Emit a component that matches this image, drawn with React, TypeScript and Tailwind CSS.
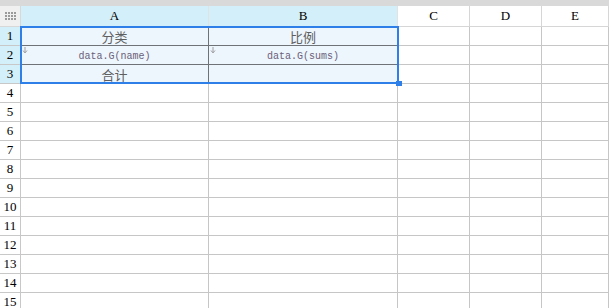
import React from "react";

const cols = [
  { key: "A", w: "w-[188px]", sel: true },
  { key: "B", w: "w-[189px]", sel: true },
  { key: "C", w: "w-[72px]", sel: false },
  { key: "D", w: "w-[72px]", sel: false },
  { key: "E", w: "flex-1", sel: false },
];

const mono = { fontFamily: '"Liberation Mono", "DejaVu Sans Mono", monospace' };
const serif = { fontFamily: '"Liberation Serif", "DejaVu Serif", serif' };
const cjk = { fontFamily: '"Noto Sans CJK SC", "Noto Sans", sans-serif' };

function DownMark() {
  return (
    <svg width="6" height="7" viewBox="0 0 6 7" className="absolute left-[1px] top-[1px]">
      <path d="M3 0v5M1 3.5L3 6l2-2.5" stroke="#a0a0a0" strokeWidth="1" fill="none" />
    </svg>
  );
}

function CornerDots() {
  return (
    <svg width="11" height="8" viewBox="0 0 11 8">
      {[0, 3, 6, 9].map((x) =>
        [0, 3, 6].map((y) => <rect key={`${x}-${y}`} x={x} y={y} width="2" height="2" fill="#9a9a9a" />)
      )}
    </svg>
  );
}

export default function App() {
  const rows = Array.from({ length: 15 }, (_, i) => i + 1);
  return (
    <div className="relative w-[609px] h-[308px] overflow-hidden bg-white">
      <div className="h-[6px] bg-[#d9d9da]" />
      {/* header */}
      <div className="flex h-[21px]">
        <div className="w-[21px] shrink-0 bg-[#f0f0f0] border-r border-b border-[#d8d8d8] flex items-center justify-center">
          <CornerDots />
        </div>
        {cols.map((c) => (
          <div
            key={c.key}
            className={`${c.w} shrink-0 border-r border-b flex items-center justify-center text-[13px] text-black ${
              c.sel ? "bg-[#d3eff9] border-[#e2e2e2]" : "bg-white border-[#d6d6d6]"
            }`}
            style={serif}
          >
            {c.key}
          </div>
        ))}
      </div>
      {rows.map((r) => {
        const sel = r <= 3;
        return (
          <div key={r} className="flex h-[19px]">
            <div
              className={`w-[21px] shrink-0 border-r border-b flex items-center justify-center text-[13px] text-black ${
                sel ? "bg-[#d3eff9] border-[#c8c8c8]" : "bg-white border-[#c8c8c8]"
              }`}
              style={serif}
            >
              {r}
            </div>
            {cols.map((c, ci) => {
              const inSel = sel && ci < 2;
              let content: React.ReactNode = null;
              if (r === 1 && c.key === "A") content = <span style={cjk} className="text-[13px] text-[#5f5f5f]">分类</span>;
              if (r === 1 && c.key === "B") content = <span style={cjk} className="text-[13px] text-[#5f5f5f]">比例</span>;
              if (r === 3 && c.key === "A") content = <span style={cjk} className="text-[13px] text-[#5f5f5f]">合计</span>;
              if (r === 2 && c.key === "A")
                content = <span style={mono} className="mt-[3px] text-[10px] text-[#6b5f78]">data.G(name)</span>;
              if (r === 2 && c.key === "B")
                content = <span style={mono} className="mt-[3px] text-[10px] text-[#6b5f78]">data.G(sums)</span>;
              return (
                <div
                  key={c.key}
                  className={`${c.w} shrink-0 relative border-r border-b flex items-center justify-center leading-none ${
                    inSel ? "bg-[#edf5fd] border-[#6f7378]" : "bg-white border-[#c6c6c6]"
                  }`}
                >
                  {r === 2 && ci < 2 && <DownMark />}
                  {content}
                </div>
              );
            })}
          </div>
        );
      })}
      {/* selection box */}
      <div className="absolute left-[20px] top-[26px] w-[379px] h-[58px] border-2 border-[#2f7fe8] pointer-events-none" />
      <div className="absolute left-[396px] top-[81px] w-[6px] h-[5px] bg-[#2f7fe8]" />
    </div>
  );
}
